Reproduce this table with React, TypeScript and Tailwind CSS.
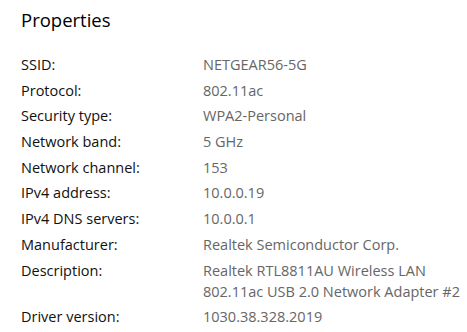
import React from "react";

// Wi-Fi properties list, Windows Settings style
const rows: { label: string; value: string[] }[] = [
  { label: "SSID:", value: ["NETGEAR56-5G"] },
  { label: "Protocol:", value: ["802.11ac"] },
  { label: "Security type:", value: ["WPA2-Personal"] },
  { label: "Network band:", value: ["5 GHz"] },
  { label: "Network channel:", value: ["153"] },
  { label: "IPv4 address:", value: ["10.0.0.19"] },
  { label: "IPv4 DNS servers:", value: ["10.0.0.1"] },
  { label: "Manufacturer:", value: ["Realtek Semiconductor Corp."] },
  { label: "Description:", value: ["Realtek RTL8811AU Wireless LAN", "802.11ac USB 2.0 Network Adapter #2"] },
  { label: "Driver version:", value: ["1030.38.328.2019"] },
];

export default function App() {
  return (
    <div
      className="w-[467px] h-[332px] bg-white overflow-hidden pl-[21px] pt-[6px]"
      style={{ fontFamily: '"Open Sans", "Noto Sans", sans-serif' }}
    >
      <h1 className="text-[18.5px] leading-[28px] text-black">Properties</h1>
      <div className="mt-[20px] flex flex-col gap-[4.7px]">
        {rows.map((r) => (
          <div key={r.label} className="flex text-[14.5px] leading-[21px] whitespace-nowrap">
            <div className="w-[182px] shrink-0 text-[#111]">{r.label}</div>
            <div className="text-[#666]">
              {r.value.map((v) => (
                <div key={v}>{v}</div>
              ))}
            </div>
          </div>
        ))}
      </div>
    </div>
  );
}
